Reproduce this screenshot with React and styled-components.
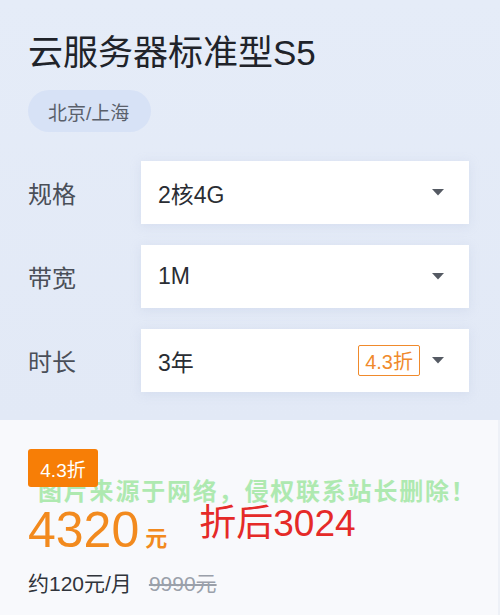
import styled, { createGlobalStyle } from 'styled-components';

const GlobalStyle = createGlobalStyle`
  html, body {
    margin: 0;
    padding: 0;
    background: #f8f9fc;
  }
  body {
    font-family: "Liberation Sans", "Noto Sans CJK SC", sans-serif;
  }
`;

const specs = [
  { label: '规格', value: '2核4G' },
  { label: '带宽', value: '1M' },
  { label: '时长', value: '3年', discount: '4.3折' },
];

const Caret = () => (
  <svg width="12" height="7" viewBox="0 0 12 7">
    <path d="M0 0 L12 0 L6 6.5 Z" fill="#555a63" />
  </svg>
);

const App = () => {
  return (
    <Card>
      <GlobalStyle />
      <Top>
        <Title>云服务器标准型S5</Title>
        <Tag>北京/上海</Tag>
        <Form>
          {specs.map((s) => (
            <Row key={s.label}>
              <Label>{s.label}</Label>
              <Select>
                <Value>{s.value}</Value>
                {s.discount && <OutlineBadge>{s.discount}</OutlineBadge>}
                <Caret />
              </Select>
            </Row>
          ))}
        </Form>
      </Top>
      <Bottom>
        <Badge>4.3折</Badge>
        <Watermark>图片来源于网络，侵权联系站长删除！</Watermark>
        <PriceRow>
          <Price>4320</Price>
          <Unit>元</Unit>
          <Note>折后3024</Note>
        </PriceRow>
        <SubRow>
          <Monthly>约120元/月</Monthly>
          <Original>9990元</Original>
        </SubRow>
      </Bottom>
    </Card>
  );
};

const Card = styled.div`
  width: 500px;
  height: 615px;
  display: flex;
  flex-direction: column;
  overflow: hidden;
`;

const Top = styled.div`
  height: 420px;
  box-sizing: border-box;
  padding: 32px 0 0 28px;
  background: linear-gradient(180deg, #e5ecf8 0%, #e2e9f6 100%);
  display: flex;
  flex-direction: column;
  align-items: flex-start;
`;

const Title = styled.h1`
  margin: 0;
  font-size: 35px;
  line-height: 42px;
  font-weight: normal;
  color: #20232a;
`;

const Tag = styled.div`
  margin-top: 16px;
  height: 42px;
  padding: 0 22px 0 20px;
  border-radius: 21px;
  background: #d7e2f6;
  color: #5a606b;
  font-size: 19px;
  display: flex;
  align-items: center;
`;

const Form = styled.div`
  margin-top: 29px;
  display: flex;
  flex-direction: column;
  gap: 21px;
`;

const Row = styled.div`
  display: flex;
  align-items: center;
`;

const Label = styled.div`
  width: 113px;
  font-size: 24px;
  color: #4a4f58;
`;

const Select = styled.div`
  width: 328px;
  height: 63px;
  box-sizing: border-box;
  background: #ffffff;
  display: flex;
  align-items: center;
  padding: 0 25px 0 17px;
  gap: 12px;
  box-shadow: 0 2px 10px rgba(170, 185, 215, 0.25);
`;

const Value = styled.div`
  flex: 1;
  font-size: 23px;
  color: #2a2d33;
`;

const OutlineBadge = styled.div`
  height: 31px;
  box-sizing: border-box;
  padding: 0 6px;
  border: 1.5px solid #f08a2c;
  border-radius: 2px;
  color: #f08a2c;
  font-size: 20px;
  display: flex;
  align-items: center;
`;

const Bottom = styled.div`
  flex: 1;
  position: relative;
  background: #f8f9fc;
  border-right: 2px solid #eef1f7;
  padding: 29px 0 0 28px;
  display: flex;
  flex-direction: column;
  align-items: flex-start;
`;

const Badge = styled.div`
  position: relative;
  z-index: 1;
  height: 38px;
  width: 70px;
  box-sizing: border-box;
  border-radius: 3px;
  background: #f77e06;
  color: #ffffff;
  font-size: 19px;
  display: flex;
  align-items: center;
  justify-content: center;
`;

const Watermark = styled.div`
  position: absolute;
  left: 38px;
  top: 52px;
  font-size: 24px;
  font-weight: bold;
  letter-spacing: 1.8px;
  color: #aee9b0;
  white-space: nowrap;
`;

const PriceRow = styled.div`
  margin-top: 13px;
  display: flex;
  align-items: flex-start;
`;

const Price = styled.div`
  font-size: 50px;
  line-height: 60px;
  color: #f28a1e;
`;

const Unit = styled.div`
  margin: 24px 0 0 6px;
  font-size: 22px;
  font-weight: bold;
  line-height: 30px;
  color: #f28a1e;
`;

const Note = styled.div`
  margin-left: 32px;
  margin-top: 2px;
  font-size: 37px;
  line-height: 44px;
  color: #e52a28;
`;

const SubRow = styled.div`
  margin-top: 7px;
  display: flex;
  align-items: baseline;
  gap: 17px;
`;

const Monthly = styled.div`
  font-size: 21px;
  color: #30343b;
`;

const Original = styled.div`
  font-size: 21px;
  color: #9aa0aa;
  text-decoration: line-through;
`;

export default App;
